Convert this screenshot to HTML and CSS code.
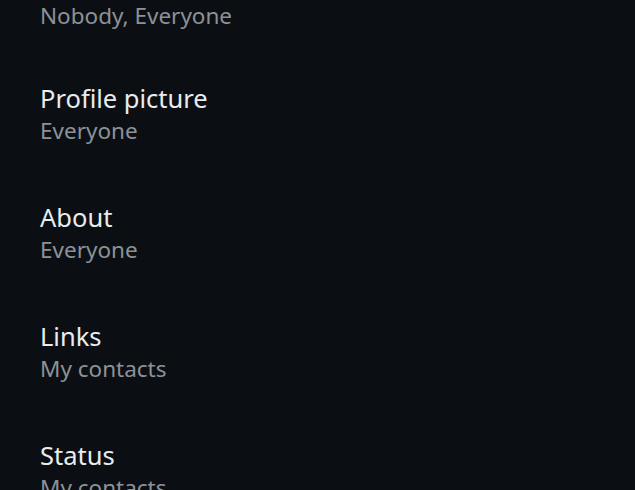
FILE: index.html
```html
<!DOCTYPE html>
<html lang="en">
<head>
<meta charset="utf-8">
<link rel="stylesheet" href="styles.css">
</head>
<body>
<ul class="list">
  <li class="item item-first"><div class="title">Last seen and online</div><div class="sub">Nobody, Everyone</div></li>
  <li class="item"><div class="title">Profile picture</div><div class="sub">Everyone</div></li>
  <li class="item"><div class="title">About</div><div class="sub">Everyone</div></li>
  <li class="item"><div class="title">Links</div><div class="sub">My contacts</div></li>
  <li class="item"><div class="title">Status</div><div class="sub">My contacts</div></li>
</ul>
</body>
</html>
```

FILE: styles.css
```css
html, body {
  margin: 0;
  padding: 0;
  background: #0b0f13;
  height: 100%;
  overflow: hidden;
}
body {
  font-family: "Noto Sans", "Open Sans", sans-serif;
}
.list {
  list-style: none;
  margin: -59px 0 0 0;
  padding: 0;
}
.item {
  height: 119px;
  box-sizing: border-box;
  padding: 26px 40px 0;
}
.item-first {
  height: 115px;
}
.title {
  color: #e9ecee;
  font-size: 25.5px;
  line-height: 33px;
}
.sub {
  color: #8c9297;
  font-size: 22.5px;
  line-height: 32px;
}
```
